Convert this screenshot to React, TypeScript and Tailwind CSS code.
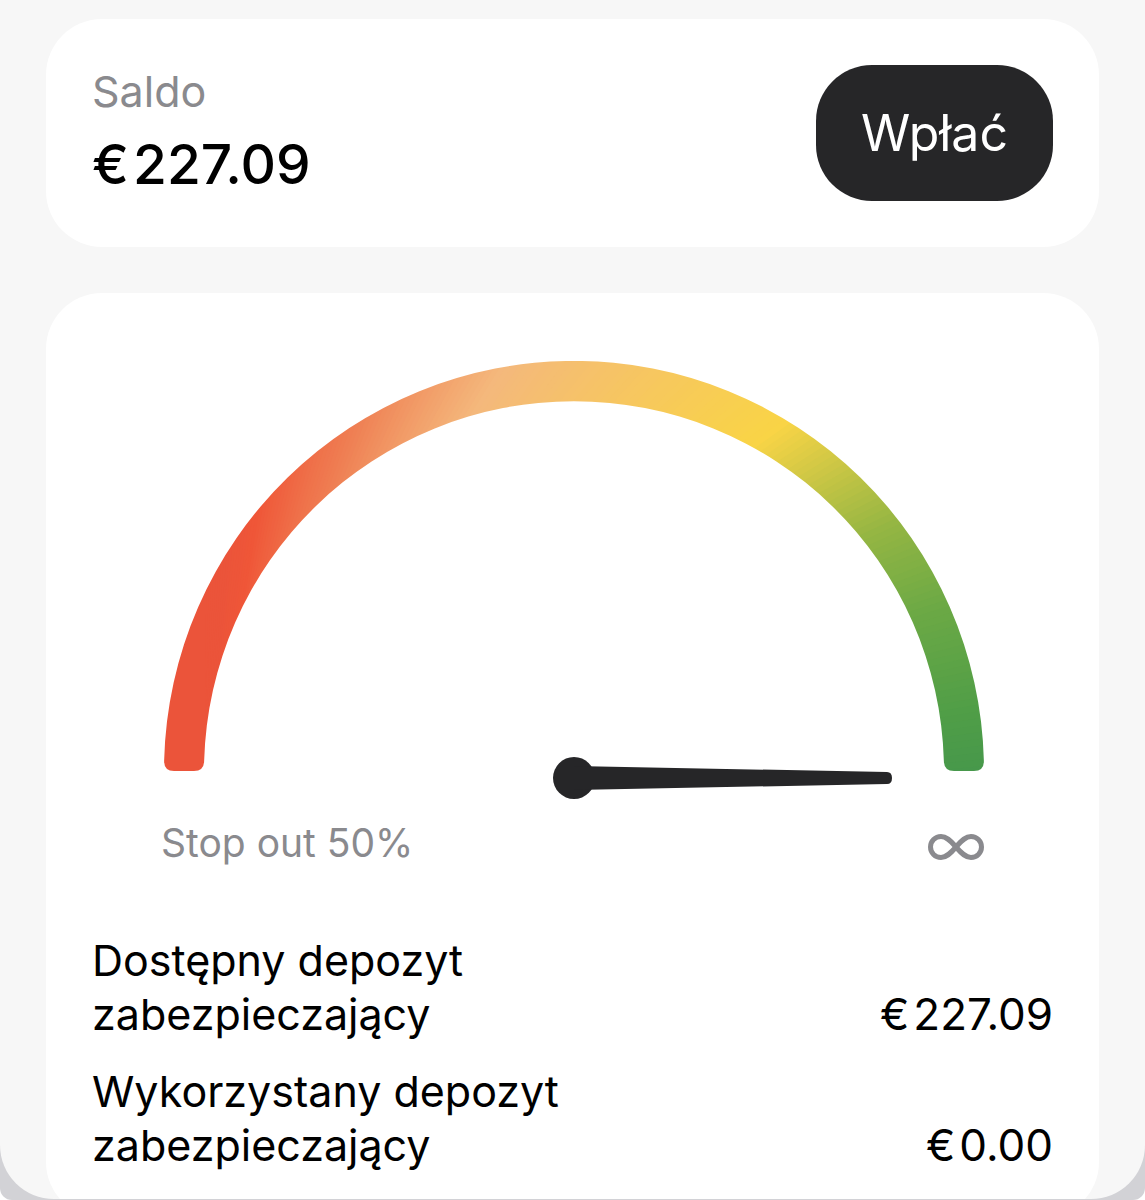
import React from "react";

type Stop = { at: number; rgb: [number, number, number] };

/* Sweep angles are measured clockwise in degrees, starting from straight up. */
const STOPS: Stop[] = [
  { at: 0, rgb: [235, 84, 58] },
  { at: 4, rgb: [235, 84, 58] },
  { at: 9, rgb: [239, 86, 56] },
  { at: 20, rgb: [239, 128, 84] },
  { at: 32, rgb: [244, 184, 124] },
  { at: 54, rgb: [249, 212, 70] },
  { at: 65, rgb: [149, 182, 67] },
  { at: 72, rgb: [108, 169, 69] },
  { at: 80, rgb: [80, 158, 71] },
  { at: 86, rgb: [68, 150, 76] },
];

const SWEEP = { x: 40, y: 480, radius: 1200, step: 0.5 };

function colorAt(angle: number) {
  let i = 0;
  while (i < STOPS.length - 2 && angle > STOPS[i + 1].at) i++;
  const a = STOPS[i];
  const b = STOPS[i + 1];
  const t = Math.min(1, Math.max(0, (angle - a.at) / (b.at - a.at)));
  const [r, g, bl] = a.rgb.map((c, k) => Math.round(c + (b.rgb[k] - c) * t));
  return `rgb(${r}, ${g}, ${bl})`;
}

function point(angle: number) {
  const rad = (angle * Math.PI) / 180;
  return `${(SWEEP.x + SWEEP.radius * Math.sin(rad)).toFixed(2)},${(SWEEP.y - SWEEP.radius * Math.cos(rad)).toFixed(2)}`;
}

const WEDGES = Array.from({ length: 181 }, (_, i) => {
  const start = i * SWEEP.step;
  return {
    color: colorAt(start),
    points: `${SWEEP.x},${SWEEP.y} ${point(start)} ${point(start + 20)} ${point(start + 40)}`,
  };
});

function Gauge() {
  return (
    <svg viewBox="0 0 820 438" className="block w-full" role="img" aria-label="Poziom depozytu">
      <defs>
        <mask id="arc" maskUnits="userSpaceOnUse" x="0" y="0" width="820" height="438">
          <path
            d="M0.120 400A410 410 0 0 1 819.880 400Q820 410 810 410H790Q780 410 779.860 400A370 370 0 0 0 40.140 400Q40 410 30 410H10Q0 410 0.120 400Z"
            fill="#fff"
          />
        </mask>
      </defs>
      <g mask="url(#arc)">
        <rect width="820" height="438" fill="#eb543a" />
        {WEDGES.map((w) => (
          <polygon key={w.points} points={w.points} fill={w.color} />
        ))}
      </g>
      <circle cx="410" cy="417" r="21" fill="#262628" />
      <path d="M410 405L723 411Q728 411 728 417Q728 423 723 423L410 429Z" fill="#262628" />
    </svg>
  );
}

function Amount({ value }: { value: string }) {
  return (
    <span className="flex items-baseline gap-1 whitespace-nowrap">
      <span>€</span>
      <span>{value}</span>
    </span>
  );
}

const ROWS = [
  { lines: ["Dostępny depozyt", "zabezpieczający"], value: "227.09" },
  { lines: ["Wykorzystany depozyt", "zabezpieczający"], value: "0.00" },
];

export default function App() {
  return (
    <div className="h-screen overflow-hidden rounded-b-xl bg-[#d2d2d6] pb-px font-['Inter',sans-serif]">
      <main className="flex h-full flex-col gap-[46px] overflow-hidden rounded-b-[54px] bg-[#f7f7f7] px-[46px] pt-[19px]">
        <section className="flex shrink-0 items-start justify-between rounded-[56px] bg-white p-[46px]">
          <div>
            <h1 className="text-[43px] leading-[52px] text-[#8a8a8e]">Saldo</h1>
            <div className="mt-3 text-[55px] leading-[70px] font-medium text-black">
              <Amount value="227.09" />
            </div>
          </div>
          <button
            type="button"
            className="rounded-[56px] bg-[#262628] px-[45px] py-[38px] text-[50px] leading-[60px] text-white"
          >
            Wpłać
          </button>
        </section>

        <section className="shrink-0 rounded-[56px] bg-white px-[46px] pt-[68px] pb-[46px]">
          <div className="pr-[69px] pl-[72px]">
            <Gauge />
          </div>
          <div className="mt-[17px] flex items-center justify-between px-[69px] text-[39px] leading-[54px] text-[#8a8a8e]">
            <span>Stop out 50%</span>
            <svg viewBox="0 0 56 26" className="mt-2 h-[26px] w-14" fill="none" role="img" aria-label="nieskończoność">
              <path
                d="M28 13C22 6 18 2.500 13 2.500A10.500 10.500 0 0 0 13 23.500C18 23.500 22 20 28 13S38 2.500 43 2.500A10.500 10.500 0 0 1 43 23.500C38 23.500 34 20 28 13Z"
                stroke="#8a8a8e"
                strokeWidth="5"
              />
            </svg>
          </div>
          <dl className="mt-[63px] flex flex-col gap-[23px] leading-[54px] text-black">
            {ROWS.map((row) => (
              <div key={row.lines[0]} className="flex items-end justify-between">
                <dt className="text-[43px]">
                  {row.lines[0]}
                  <br />
                  {row.lines[1]}
                </dt>
                <dd className="text-[44px]">
                  <Amount value={row.value} />
                </dd>
              </div>
            ))}
          </dl>
        </section>
      </main>
    </div>
  );
}
